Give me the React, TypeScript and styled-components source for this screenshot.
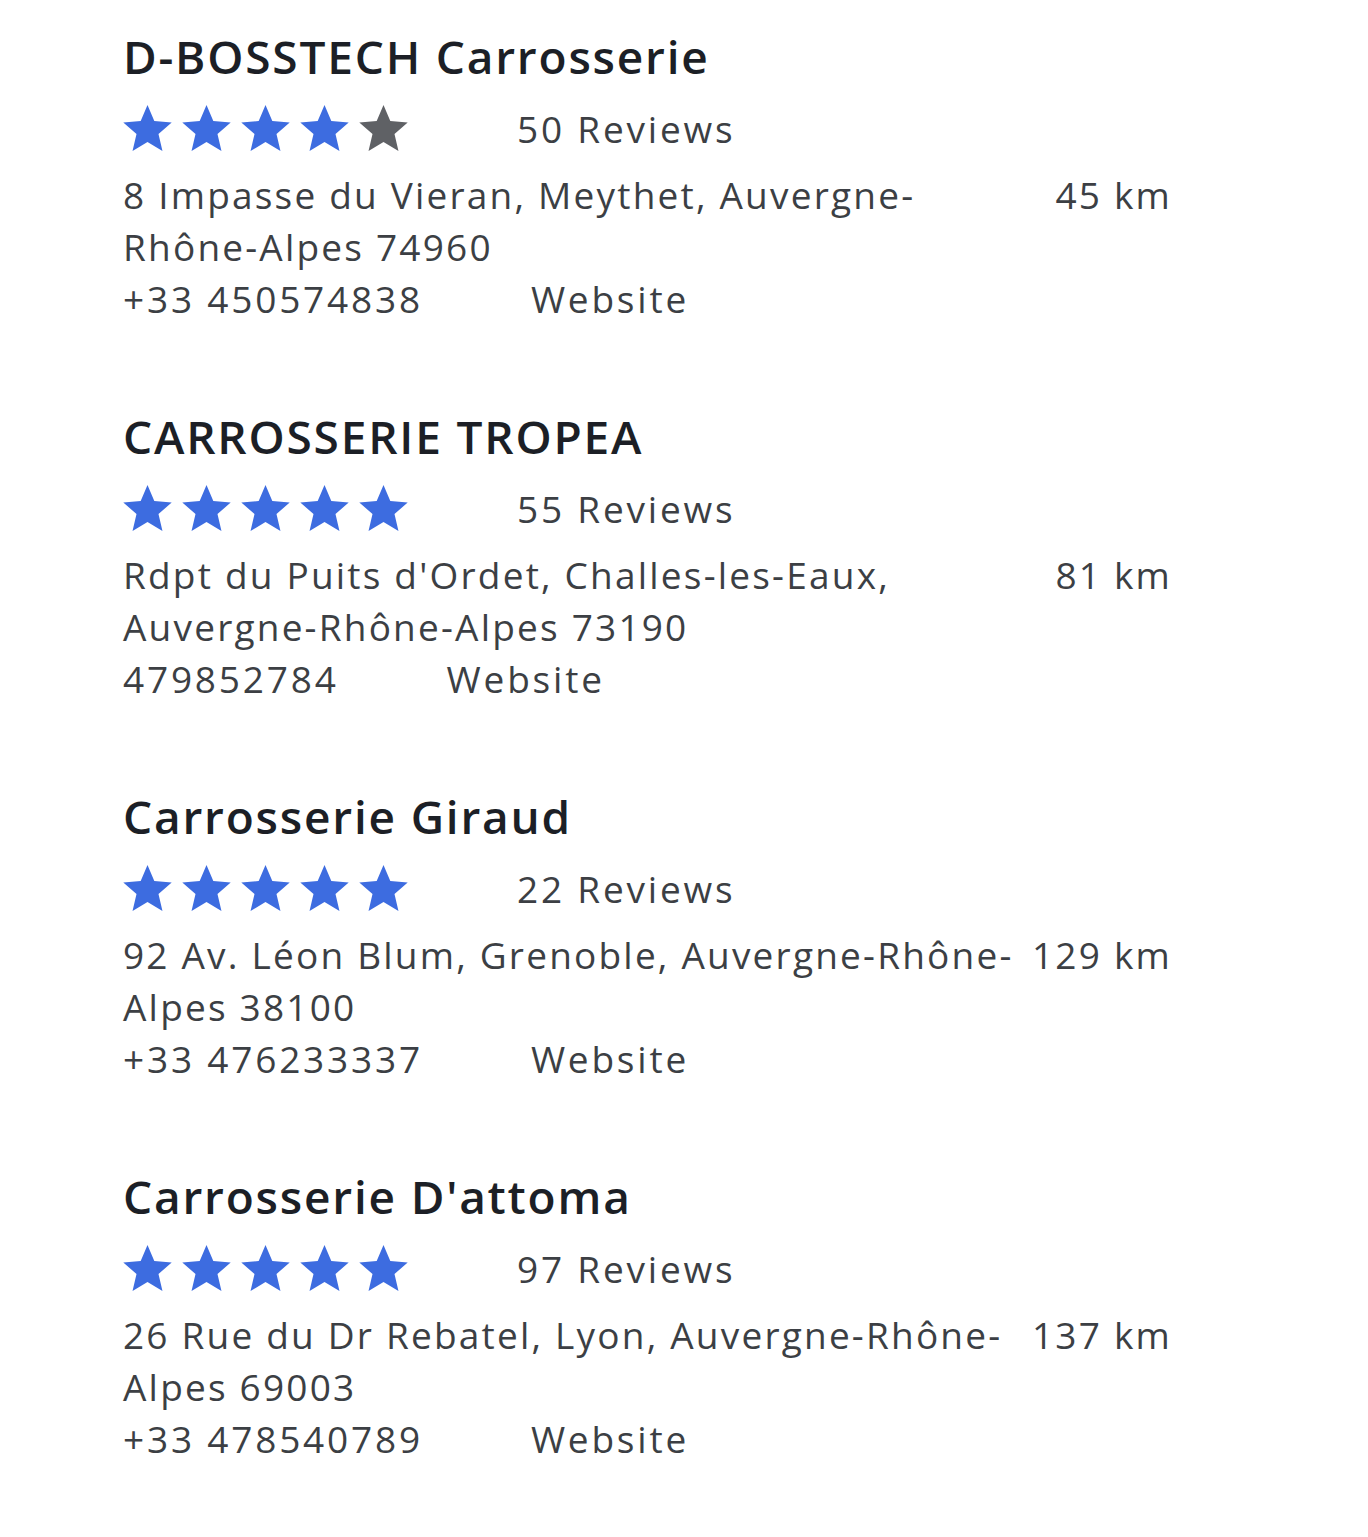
import styled, { createGlobalStyle } from "styled-components";

const GlobalStyle = createGlobalStyle`
  html, body {
    margin: 0;
    padding: 0;
    background: #ffffff;
  }
  body {
    font-family: "Open Sans", "Liberation Sans", sans-serif;
    -webkit-font-smoothing: antialiased;
  }
`;

const List = styled.div`
  display: flex;
  flex-direction: column;
  gap: 83px;
  width: 1049px;
  padding: 28px 0 70px 123px;
`;

const Card = styled.div`
  display: flex;
  flex-direction: column;
`;

const Title = styled.h2`
  margin: 0;
  font-size: 46px;
  line-height: 56px;
  font-weight: 600;
  letter-spacing: 1.8px;
  color: #1c1f26;
`;

const RatingRow = styled.div`
  display: flex;
  align-items: center;
  height: 46px;
  margin: 21px 0 18px;
`;

const Stars = styled.div`
  display: flex;
  gap: 10px;
  width: 394px;
`;

const StarIcon = styled.svg<{ filled: boolean }>`
  width: 49px;
  height: 46px;
  fill: ${(p) => (p.filled ? "#3d6ce0" : "#5f6165")};
`;

const Reviews = styled.span`
  font-size: 37px;
  letter-spacing: 2.8px;
  color: #3c3f44;
`;

const Body = styled.div`
  display: flex;
  align-items: flex-start;
  gap: 8px;
  font-size: 37px;
  line-height: 52px;
  letter-spacing: 2.2px;
  color: #3c3f44;
`;

const Address = styled.div`
  flex: 1;
  min-width: 0;
`;

const Distance = styled.div`
  flex-shrink: 0;
  text-align: right;
  white-space: nowrap;
`;

const ContactRow = styled.div`
  display: flex;
  font-size: 37px;
  line-height: 52px;
  letter-spacing: 2.8px;
  color: #3c3f44;
`;

const WebsiteLink = styled.a`
  margin-left: 108px;
  color: inherit;
  text-decoration: none;
`;

interface Shop {
  name: string;
  rating: number;
  reviews: number;
  address: string;
  distance: string;
  phone: string;
}

const shops: Shop[] = [
  {
    name: "D-BOSSTECH Carrosserie",
    rating: 4,
    reviews: 50,
    address: "8 Impasse du Vieran, Meythet, Auvergne-Rhône-Alpes 74960",
    distance: "45 km",
    phone: "+33 450574838",
  },
  {
    name: "CARROSSERIE TROPEA",
    rating: 5,
    reviews: 55,
    address: "Rdpt du Puits d'Ordet, Challes-les-Eaux, Auvergne-Rhône-Alpes 73190",
    distance: "81 km",
    phone: "479852784",
  },
  {
    name: "Carrosserie Giraud",
    rating: 5,
    reviews: 22,
    address: "92 Av. Léon Blum, Grenoble, Auvergne-Rhône-Alpes 38100",
    distance: "129 km",
    phone: "+33 476233337",
  },
  {
    name: "Carrosserie D'attoma",
    rating: 5,
    reviews: 97,
    address: "26 Rue du Dr Rebatel, Lyon, Auvergne-Rhône-Alpes 69003",
    distance: "137 km",
    phone: "+33 478540789",
  },
];

function Star({ filled }: { filled: boolean }) {
  return (
    <StarIcon filled={filled} viewBox="2 2 20 19">
      <path d="M12 17.27L18.18 21l-1.64-7.03L22 9.24l-7.19-.61L12 2 9.19 8.63 2 9.24l5.46 4.73L5.82 21z" />
    </StarIcon>
  );
}

export default function App() {
  return (
    <>
      <GlobalStyle />
      <List>
        {shops.map((s) => (
          <Card key={s.name}>
            <Title>{s.name}</Title>
            <RatingRow>
              <Stars>
                {[1, 2, 3, 4, 5].map((i) => (
                  <Star key={i} filled={i <= s.rating} />
                ))}
              </Stars>
              <Reviews>{s.reviews} Reviews</Reviews>
            </RatingRow>
            <Body>
              <Address>{s.address}</Address>
              <Distance>{s.distance}</Distance>
            </Body>
            <ContactRow>
              <span>{s.phone}</span>
              <WebsiteLink href="#">Website</WebsiteLink>
            </ContactRow>
          </Card>
        ))}
      </List>
    </>
  );
}
